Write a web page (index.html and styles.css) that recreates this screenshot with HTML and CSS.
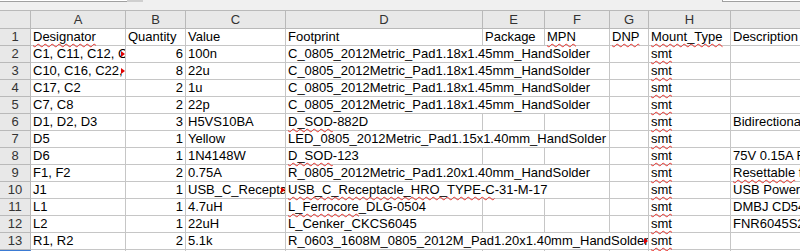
FILE: index.html
```html
<!DOCTYPE html>
<html lang="en">
<head>
    <meta charset="UTF-8">
    <title>bom.csv - Calc</title>
    <link rel="stylesheet" href="styles.css">
</head>
<body>

<!-- formula bar edge -->
<div class="topbar">
    <div class="name-box"></div>
    <div class="name-drop"></div>
    <div class="formula-input"></div>
</div>

<div class="sheet">
    <div class="row head">
        <div class="corner"></div>
        <div class="ch">A</div>
        <div class="ch">B</div>
        <div class="ch">C</div>
        <div class="ch">D</div>
        <div class="ch">E</div>
        <div class="ch">F</div>
        <div class="ch">G</div>
        <div class="ch">H</div>
        <div class="ch">I</div>
    </div>

    <div class="row">
        <div class="rh">1</div>
        <div class="c"><span class="sp">Designator</span></div>
        <div class="c">Quantity</div>
        <div class="c">Value</div>
        <div class="c">Footprint</div>
        <div class="c">Package</div>
        <div class="c"><span class="sp">MPN</span></div>
        <div class="c"><span class="sp">DNP</span></div>
        <div class="c"><span class="sp">Mount_Type</span></div>
        <div class="c">Description</div>
    </div>

    <div class="row">
        <div class="rh">2</div>
        <div class="c clip">C1, C11, C12, C13, C14, C3<i class="more"></i></div>
        <div class="c num">6</div>
        <div class="c">100n</div>
        <div class="c span3">C_0805_2012Metric_Pad1.18x1.45mm_HandSolder</div>
        <div class="c"></div>
        <div class="c"><span class="sp">smt</span></div>
        <div class="c"></div>
    </div>

    <div class="row">
        <div class="rh">3</div>
        <div class="c clip">C10, C16, C22, C23, C24, C4<i class="more"></i></div>
        <div class="c num">8</div>
        <div class="c">22u</div>
        <div class="c span3">C_0805_2012Metric_Pad1.18x1.45mm_HandSolder</div>
        <div class="c"></div>
        <div class="c"><span class="sp">smt</span></div>
        <div class="c"></div>
    </div>

    <div class="row">
        <div class="rh">4</div>
        <div class="c">C17, C2</div>
        <div class="c num">2</div>
        <div class="c">1u</div>
        <div class="c span3">C_0805_2012Metric_Pad1.18x1.45mm_HandSolder</div>
        <div class="c"></div>
        <div class="c"><span class="sp">smt</span></div>
        <div class="c"></div>
    </div>

    <div class="row">
        <div class="rh">5</div>
        <div class="c">C7, C8</div>
        <div class="c num">2</div>
        <div class="c">22p</div>
        <div class="c span3">C_0805_2012Metric_Pad1.18x1.45mm_HandSolder</div>
        <div class="c"></div>
        <div class="c"><span class="sp">smt</span></div>
        <div class="c"></div>
    </div>

    <div class="row">
        <div class="rh">6</div>
        <div class="c">D1, D2, D3</div>
        <div class="c num">3</div>
        <div class="c">H5VS10BA</div>
        <div class="c"><span class="sp">D_SOD</span>-882D</div>
        <div class="c"></div>
        <div class="c"></div>
        <div class="c"></div>
        <div class="c"><span class="sp">smt</span></div>
        <div class="c">Bidirectional TVS diode</div>
    </div>

    <div class="row">
        <div class="rh">7</div>
        <div class="c">D5</div>
        <div class="c num">1</div>
        <div class="c">Yellow</div>
        <div class="c span3">LED_0805_2012Metric_Pad1.15x1.40mm_HandSolder</div>
        <div class="c"></div>
        <div class="c"><span class="sp">smt</span></div>
        <div class="c"></div>
    </div>

    <div class="row">
        <div class="rh">8</div>
        <div class="c">D6</div>
        <div class="c num">1</div>
        <div class="c">1N4148W</div>
        <div class="c"><span class="sp">D_SOD</span>-123</div>
        <div class="c"></div>
        <div class="c"></div>
        <div class="c"></div>
        <div class="c"><span class="sp">smt</span></div>
        <div class="c">75V 0.15A Fast Switching Diode</div>
    </div>

    <div class="row">
        <div class="rh">9</div>
        <div class="c">F1, F2</div>
        <div class="c num">2</div>
        <div class="c">0.75A</div>
        <div class="c span3">R_0805_2012Metric_Pad1.20x1.40mm_HandSolder</div>
        <div class="c"></div>
        <div class="c"><span class="sp">smt</span></div>
        <div class="c"><span class="sp">Resettable</span> fuse</div>
    </div>

    <div class="row">
        <div class="rh">10</div>
        <div class="c">J1</div>
        <div class="c num">1</div>
        <div class="c clip">USB_C_Receptacle_HRO_TYPE-C-31-M-17<i class="more"></i></div>
        <div class="c span3"><span class="sp">USB_C_Receptacle_HRO_TYPE-C</span>-31-M-17</div>
        <div class="c"></div>
        <div class="c"><span class="sp">smt</span></div>
        <div class="c">USB Power-Only Receptacle</div>
    </div>

    <div class="row">
        <div class="rh">11</div>
        <div class="c">L1</div>
        <div class="c num">1</div>
        <div class="c">4.7uH</div>
        <div class="c"><span class="sp">L_Ferrocore</span>_DLG-0504</div>
        <div class="c"></div>
        <div class="c"></div>
        <div class="c"></div>
        <div class="c"><span class="sp">smt</span></div>
        <div class="c">DMBJ CD54 4.7uH</div>
    </div>

    <div class="row">
        <div class="rh">12</div>
        <div class="c">L2</div>
        <div class="c num">1</div>
        <div class="c">22uH</div>
        <div class="c">L_Cenker_CKCS6045</div>
        <div class="c"></div>
        <div class="c"></div>
        <div class="c"></div>
        <div class="c"><span class="sp">smt</span></div>
        <div class="c">FNR6045S220MT</div>
    </div>

    <div class="row">
        <div class="rh">13</div>
        <div class="c">R1, R2</div>
        <div class="c num">2</div>
        <div class="c">5.1k</div>
        <div class="c span4 clip">R_0603_1608M_0805_2012M_Pad1.20x1.40mm_HandSolder<i class="more"></i></div>
        <div class="c"><span class="sp">smt</span></div>
        <div class="c"></div>
    </div>

    <div class="row">
        <div class="rh current">14</div>
        <div class="c"></div>
        <div class="c"></div>
        <div class="c"></div>
        <div class="c"></div>
        <div class="c"></div>
        <div class="c"></div>
        <div class="c"></div>
        <div class="c"></div>
        <div class="c"></div>
    </div>
</div>

</body>
</html>
```

FILE: styles.css
```css
body {
    margin: 0;
    font-family: "Liberation Sans", Arial, sans-serif;
    font-size: 13px;
    color: #000000;
    background-color: #ffffff;
    overflow: hidden;
}
.topbar {
    display: flex;
    height: 10px;
    background-color: #f0f0f0;
}
.name-box {
    width: 127px;
    height: 1px;
    background-color: #ffffff;
    border-bottom: 1px solid #a0a0a0;
}
.name-drop {
    width: 16px;
    height: 2px;
    background-color: #cfcfcf;
}
.formula-input {
    margin-left: auto;
    width: 77px;
    height: 1px;
    background-color: #ffffff;
    border-left: 1px solid #a0a0a0;
    border-bottom: 1px solid #a0a0a0;
}
.sheet {
    width: 900px;
}
.row {
    display: grid;
    grid-template-columns: 31px 95px 60px 100px 197px 62px 65px 39px 82px 169px;
    height: 17px;
}
.row.head {
    height: 19px;
}
.c, .rh, .ch, .corner {
    box-sizing: border-box;
    border-right: 1px solid #c6c6c6;
    border-bottom: 1px solid #c6c6c6;
    line-height: 16px;
    white-space: nowrap;
    padding: 0 2px;
}
.c {
    position: relative;
}
.rh, .ch, .corner {
    background-color: #e8e8e8;
    color: #333333;
    text-align: center;
    border-color: #b9b9b9;
}
.ch, .corner {
    border-top: 1px solid #b9b9b9;
    line-height: 17px;
}
.num {
    text-align: right;
}
.span3 {
    grid-column: span 3;
}
.span4 {
    grid-column: span 4;
}
.clip {
    overflow: hidden;
    padding-right: 0;
}
.more {
    position: absolute;
    right: 0;
    top: 5px;
    width: 0;
    height: 0;
    border-left: 4px solid #e00000;
    border-top: 3px solid transparent;
    border-bottom: 3px solid transparent;
}
.sp {
    text-decoration: underline wavy #e8302a;
    text-decoration-thickness: 1px;
    text-underline-offset: 2px;
    text-decoration-skip-ink: none;
}
.rh.current {
    border-top: 2px solid #3b7bd4;
}
```
